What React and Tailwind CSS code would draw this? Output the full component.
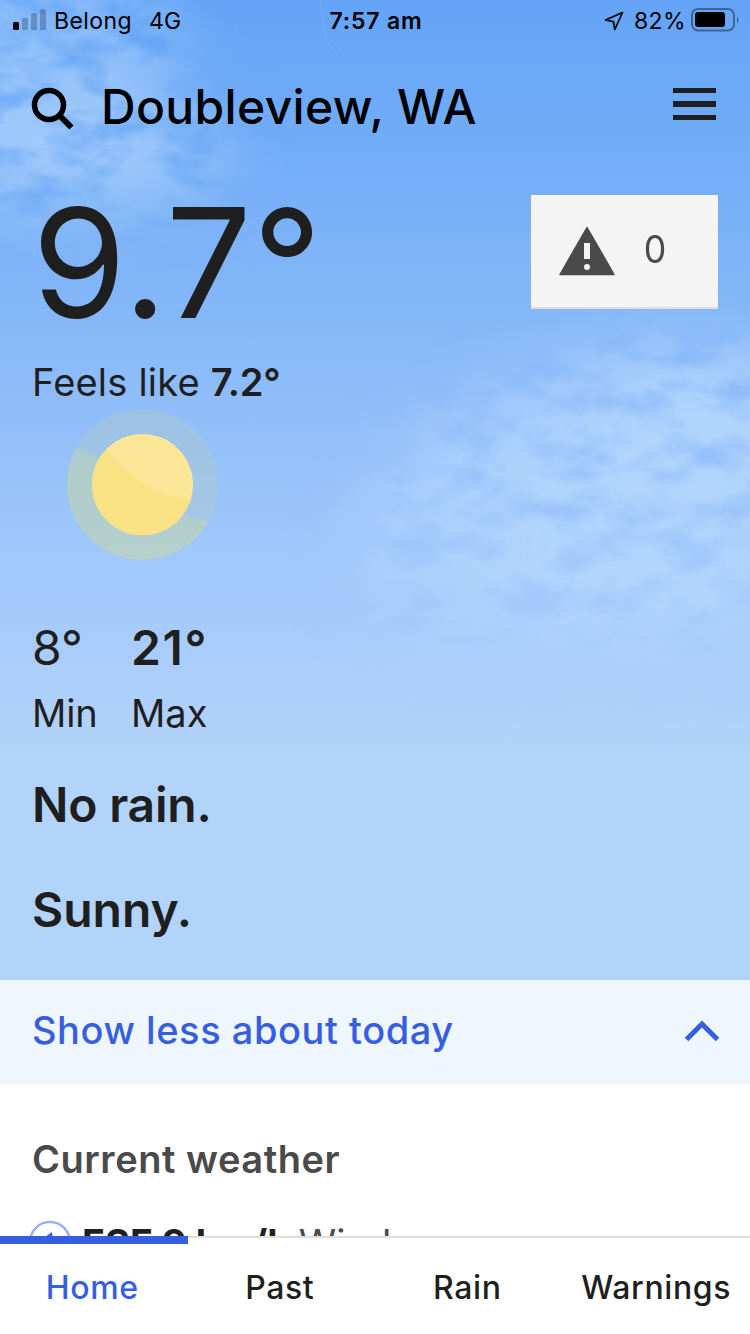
import React from "react";

const tabs = ["Home", "Past", "Rain", "Warnings"];

const StatusBar = () => {
	return (
		<div className="grid grid-cols-3 items-center h-[42px] pl-[13px] pr-[11px] text-[23px] leading-[42px] text-black">
			<div className="flex items-center">
				<svg width="33" height="22" viewBox="0 0 33 22" className="mr-2 -mt-0.5">
					<rect x="0" y="13" width="6" height="8" rx="1.5" fill="#000" />
					<g fill="#000" opacity="0.22">
						<rect x="9" y="9" width="6" height="12" rx="1.5" />
						<rect x="18" y="4" width="6" height="17" rx="1.5" />
						<rect x="27" y="0" width="6" height="21" rx="1.5" />
					</g>
				</svg>
				<span className="tracking-[0.4px]">Belong</span>
				<span className="ml-[17px] tracking-[0.3px]">4G</span>
			</div>
			<div className="text-center font-semibold tracking-[0.8px]">7:57 am</div>
			<div className="flex items-center justify-end">
				<svg width="20" height="20" viewBox="0 0 20 20" className="mr-2.5">
					<path
						d="M18.500 1.500 1.500 9 9.400 10.600 10.800 18.500Z"
						fill="none"
						stroke="#000"
						strokeWidth="1.7"
						strokeLinejoin="round"
					/>
				</svg>
				<span className="tracking-[0.4px]">82%</span>
				<svg width="48" height="24" viewBox="0 0 48 24" className="ml-[5px] -mt-[3px]">
					<rect
						x="1"
						y="1"
						width="42"
						height="21.5"
						rx="6"
						fill="none"
						stroke="#000"
						strokeOpacity="0.4"
						strokeWidth="2"
					/>
					<rect x="4" y="4" width="30" height="15" rx="3" fill="#000" />
					<path d="M46 8.5c2 1 2 5.500 0 6.500Z" fill="#000" opacity="0.4" />
				</svg>
			</div>
		</div>
	);
};

const Clouds = () => {
	return (
		<svg
			className="absolute inset-0"
			width="750"
			height="980"
			viewBox="0 0 750 980"
		>
			<defs>
				<filter
					id="wisps"
					x="0"
					y="0"
					width="100%"
					height="100%"
					colorInterpolationFilters="sRGB"
				>
					<feTurbulence
						type="fractalNoise"
						baseFrequency="0.018 0.034"
						numOctaves="4"
						seed="21"
					/>
					<feColorMatrix values="0 0 0 0 0.69  0 0 0 0 0.83  0 0 0 0 0.99  2.6 0 0 0 -0.55" />
				</filter>
				<filter id="soft" x="-50%" y="-50%" width="200%" height="200%">
					<feGaussianBlur stdDeviation="35" />
				</filter>
				<mask
					id="cloudMask"
					maskUnits="userSpaceOnUse"
					x="0"
					y="0"
					width="750"
					height="980"
				>
					<g fill="#fff" filter="url(#soft)">
						<ellipse cx="40" cy="50" rx="140" ry="80" opacity="0.55" />
						<ellipse cx="70" cy="155" rx="160" ry="55" opacity="0.7" />
						<ellipse
							cx="600"
							cy="500"
							rx="250"
							ry="135"
							opacity="0.8"
							transform="rotate(-18 600 500)"
						/>
						<ellipse cx="640" cy="550" rx="160" ry="120" opacity="0.9" />
						<ellipse cx="700" cy="460" rx="120" ry="110" opacity="0.8" />
					</g>
				</mask>
			</defs>
			<g mask="url(#cloudMask)">
				<rect width="750" height="980" filter="url(#wisps)" />
			</g>
			<path
				d="M320 0c4 18 2 36 10 46 3 5 6 8 9 12"
				fill="none"
				stroke="#b5d5fc"
				strokeOpacity="0.2"
			/>
		</svg>
	);
};

const Header = () => {
	return (
		<header className="flex items-center h-[130px] pl-[31px] pr-[34px]">
			<svg width="44" height="44" viewBox="0 0 44 44" className="mt-1">
				<circle cx="18" cy="18" r="14.500" fill="none" stroke="#000" strokeWidth="5.500" />
				<path d="m28 28 12.500 12.500" stroke="#000" strokeWidth="6" />
			</svg>
			<h1 className="ml-[26px] text-[48px] font-medium tracking-[0.35px] leading-none text-black">
				Doubleview, WA
			</h1>
			<div className="ml-auto mb-1.5 flex flex-col gap-2">
				<span className="block h-[5.500px] w-[43px] bg-[#1f1f1f]" />
				<span className="block h-[5.500px] w-[43px] bg-[#1f1f1f]" />
				<span className="block h-[5.500px] w-[43px] bg-[#1f1f1f]" />
			</div>
		</header>
	);
};

const Sun = () => {
	return (
		<svg width="152" height="152" viewBox="0 0 152 152" className="ml-[35px]">
			<defs>
				<clipPath id="halo">
					<circle cx="75.500" cy="75.500" r="75.500" />
				</clipPath>
				<clipPath id="disc">
					<circle cx="75.500" cy="75.500" r="50.500" />
				</clipPath>
			</defs>
			<g clipPath="url(#halo)">
				<rect width="152" height="152" fill="#ddd76b" opacity="0.15" />
				<path
					d="M0 33 11 38Q28 47 42 56Q85 105 141 112L152 114V152H0Z"
					fill="#e0e478"
					opacity="0.23"
				/>
			</g>
			<g clipPath="url(#disc)">
				<rect width="152" height="152" fill="#fbe597" />
				<path d="M30 31 40 41Q76 86 124 90L152 92V152H0V31Z" fill="#f9e284" />
			</g>
		</svg>
	);
};

const WarningBadge = () => {
	return (
		<div className="mt-[23px] flex h-[114px] w-[187px] items-center border-b-2 border-[#dedede] bg-[#f4f4f4] pl-7 text-[#4a4a4a]">
			<svg width="56" height="50" viewBox="0 0 56 50">
				<path
					d="M28 1.500 55 48.500H1Z"
					fill="#4a4a4a"
					stroke="#4a4a4a"
					strokeWidth="1.500"
					strokeLinejoin="round"
				/>
				<rect x="25" y="17" width="6" height="16" fill="#f4f4f4" />
				<circle cx="28" cy="41" r="3" fill="#f4f4f4" />
			</svg>
			<span className="ml-7 mb-1 inline-block scale-x-[0.94] text-[38px]">0</span>
		</div>
	);
};

const Current = () => {
	return (
		<section className="h-[808px] pl-8 pr-8 text-[#1f1f1f]">
			<div className="flex h-[183px] items-start justify-between">
				<div className="text-[152px] leading-[183px] tracking-[0.8px]">9.7°</div>
				<WarningBadge />
			</div>
			<p className="text-[38px] leading-[54px] tracking-[0.2px]">
				Feels like{" "}
				<span className="font-semibold tracking-[-0.1px]">7.2°</span>
			</p>
			<Sun />
			<div className="mt-[55px] flex">
				<div className="w-[99px]">
					<div className="text-[48px] leading-[64px]">8°</div>
					<div className="text-[38px] leading-[66px] tracking-[-0.2px]">Min</div>
				</div>
				<div>
					<div className="text-[48px] font-semibold leading-[64px] tracking-[1.6px]">21°</div>
					<div className="text-[38px] leading-[66px]">Max</div>
				</div>
			</div>
			<p className="mt-[27px] text-[48px] font-semibold leading-[64px] tracking-[-0.2px]">
				No rain.
			</p>
			<p className="mt-[41px] text-[48px] font-semibold leading-[64px]">
				Sunny.
			</p>
		</section>
	);
};

const App = () => {
	return (
		<div className="flex h-[1334px] w-[750px] flex-col overflow-hidden bg-white font-['Inter',sans-serif]">
			<main className="h-[1236px] overflow-hidden">
				{/* Sky */}
				<div className="relative h-[980px] bg-[linear-gradient(180deg,#64a4f6_0px,#70abf6_130px,#84b7f8_310px,#9ac4fa_500px,#adcffb_690px,#b2d4fa_760px,#b2d4fa_980px)]">
					<Clouds />
					<div className="relative">
						<StatusBar />
						<Header />
						<Current />
					</div>
				</div>

				{/* Toggle */}
				<button className="flex h-[104px] w-full items-center justify-between bg-[#eff6fe] pl-8 pr-[30px] pb-[3px] text-[#355fe0]">
					<span className="text-[38px] font-medium tracking-[0.55px]">
						Show less about today
					</span>
					<svg width="36" height="22" viewBox="0 0 36 22">
						<path d="M2.500 19.500 18 4l15.500 15.500" fill="none" stroke="#355fe0" strokeWidth="5" />
					</svg>
				</button>

				{/* Details */}
				<section className="pt-[45px] pl-8">
					<h2 className="text-[38px] font-semibold leading-[60px] tracking-[0.55px] text-[#4a4a4a]">
						Current weather
					</h2>
					<div className="-ml-1 mt-[23px] flex h-[60px] items-center text-[38px] leading-[60px]">
						<svg width="44" height="44" viewBox="0 0 44 44">
							<circle cx="22" cy="22" r="20" fill="none" stroke="#9ab0ef" strokeWidth="2.500" />
							<path d="M24 12 10 22l12-2 4 12Z" fill="#355fe0" />
						</svg>
						<span className="ml-2.5 mt-0.5 font-bold text-[#1f1f1f]">ESE 9 km/h</span>
						<span className="ml-2 mt-0.5 text-[#4a4a4a]">Wind</span>
					</div>
				</section>
			</main>

			{/* Bottom tabs */}
			<nav className="grid h-[98px] grid-cols-4 bg-white text-center text-[32px] font-medium tracking-[0.6px]">
				{tabs.map((tab, index) => (
					<a
						key={tab}
						className={
							index === 0
								? "border-t-8 border-[#355fe0] pr-[3px] text-[#355fe0] leading-[88px]"
								: "border-t-2 border-[#dedede] pr-[3px] last:pr-0 text-[#1f1f1f] leading-[100px]"
						}
					>
						{tab}
					</a>
				))}
			</nav>
		</div>
	);
};

export default App;
